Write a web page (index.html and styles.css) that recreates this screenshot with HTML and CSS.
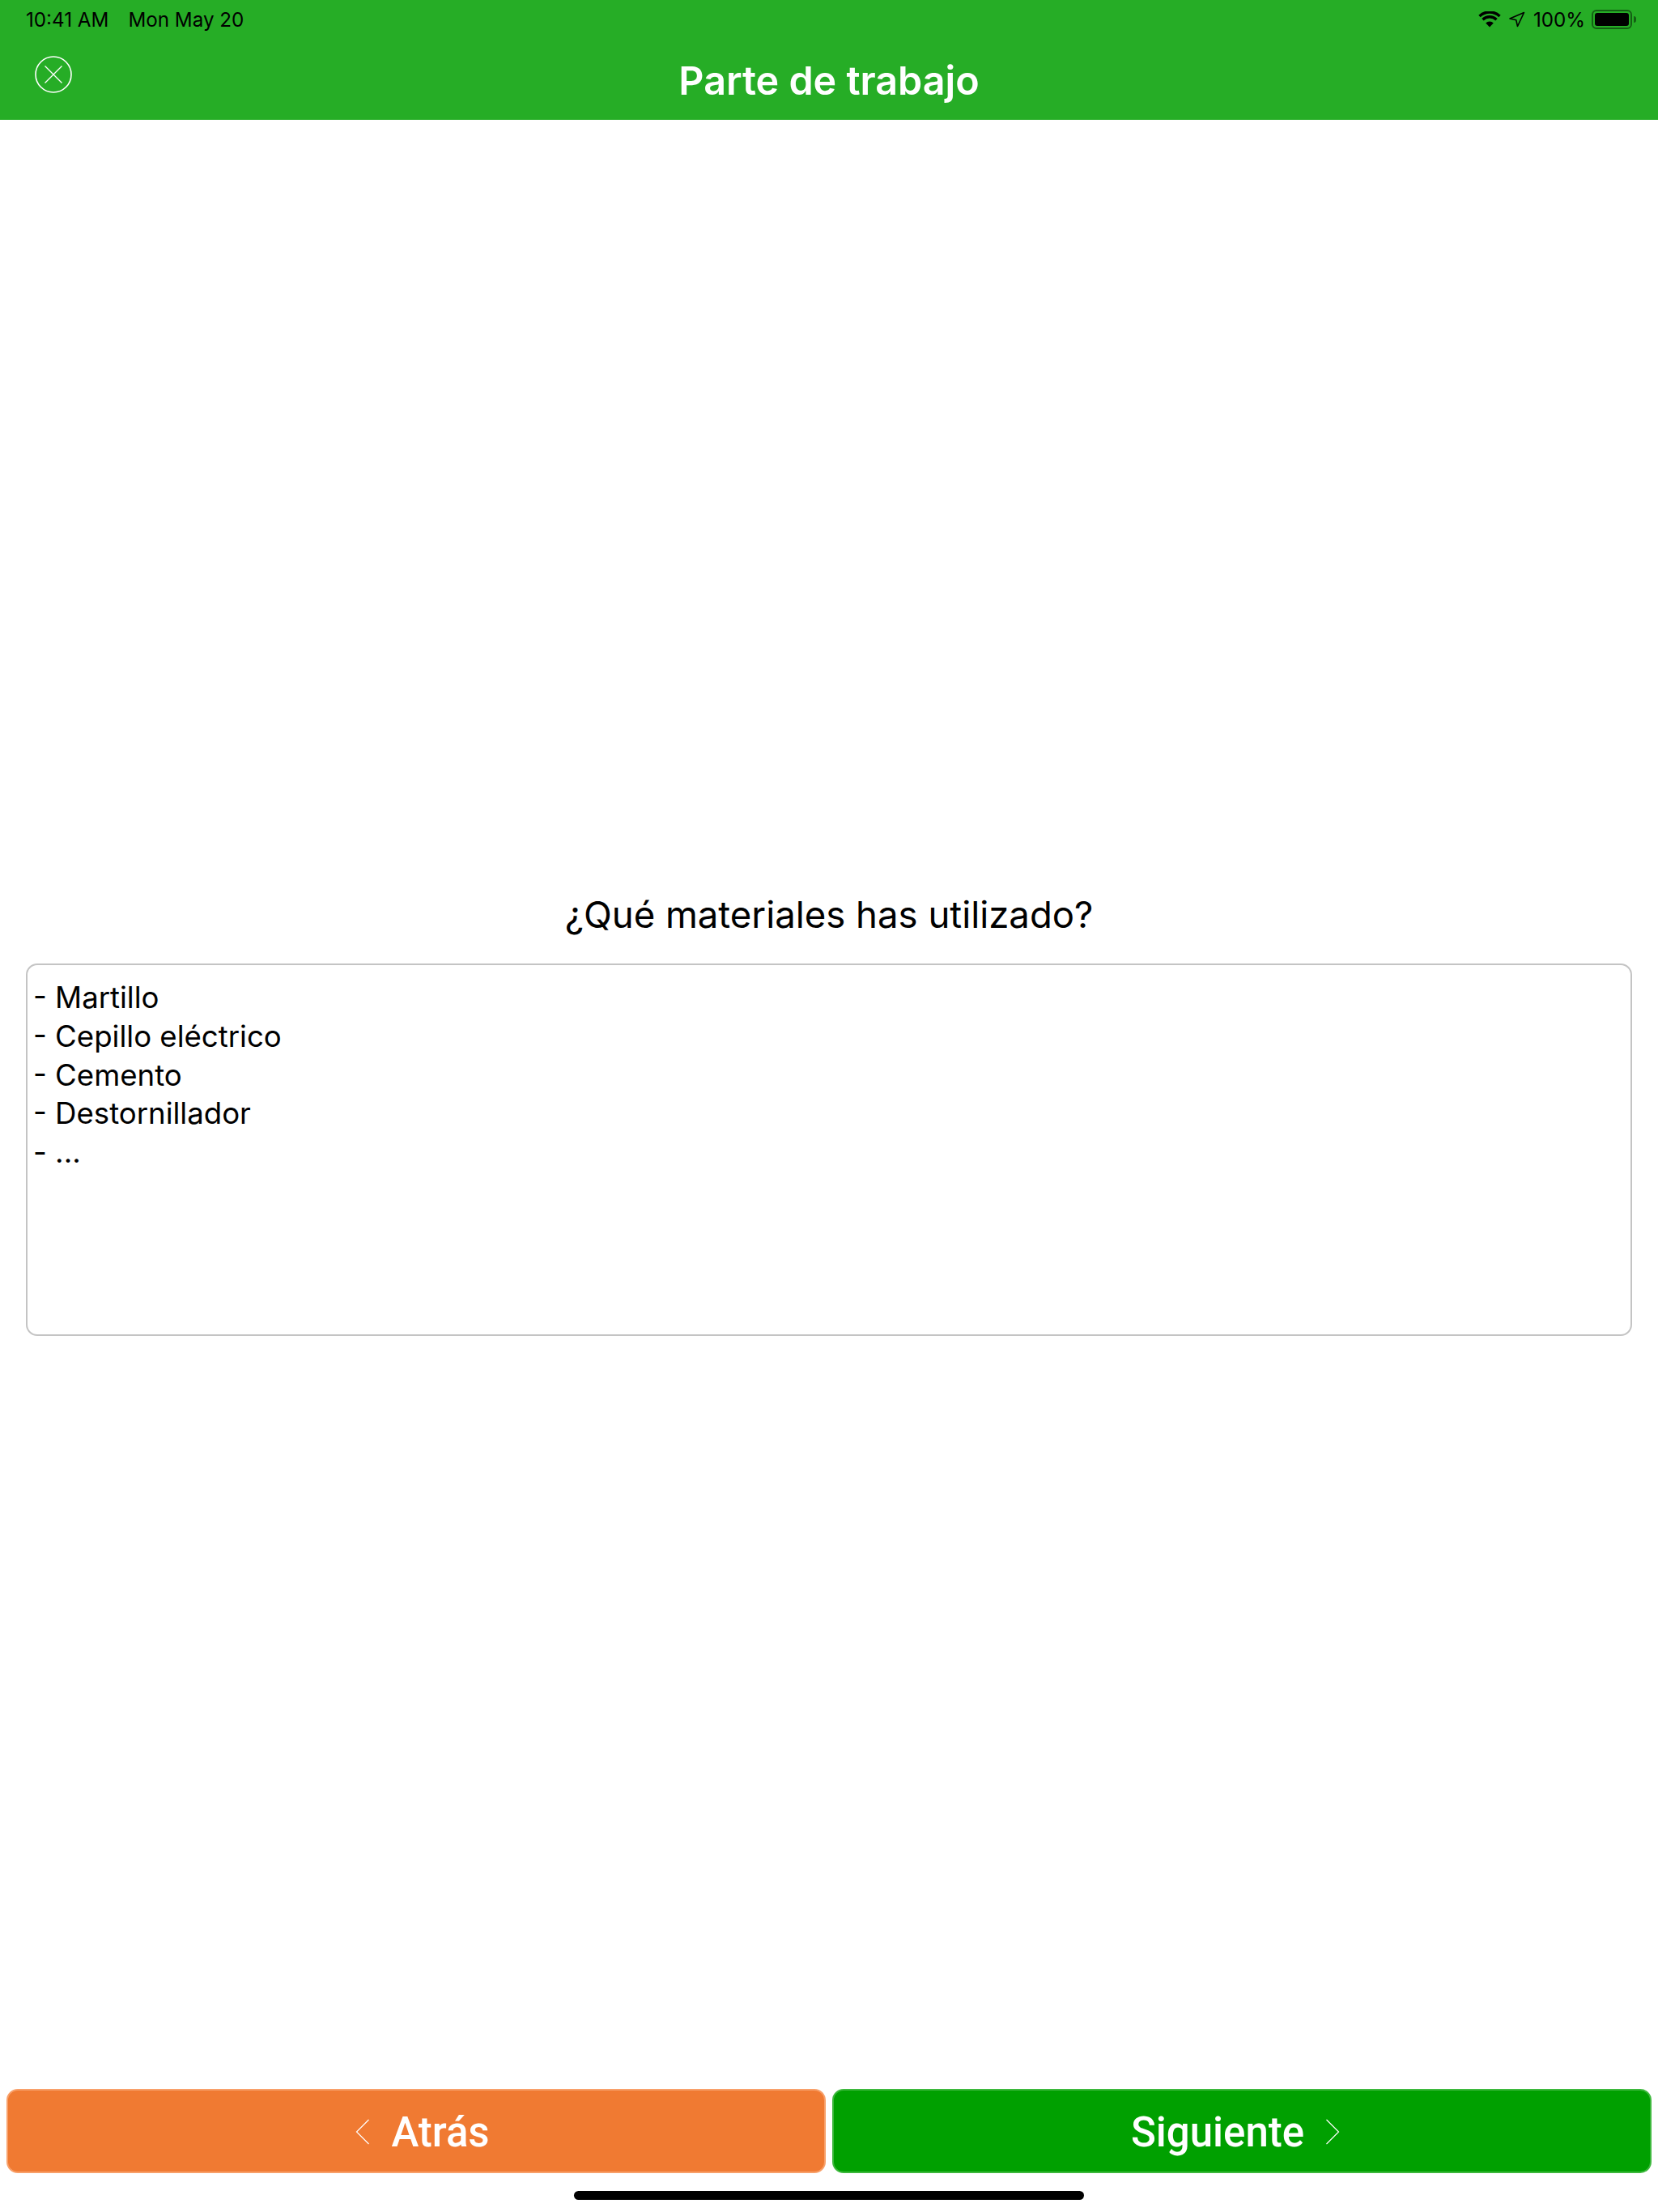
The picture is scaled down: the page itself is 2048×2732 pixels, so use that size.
FILE: index.html
```html
<!DOCTYPE html>
<html lang="es">
<head>
<meta charset="utf-8">
<title>Parte de trabajo</title>
<link rel="stylesheet" href="styles.css">
</head>
<body>
<header class="header">
  <div class="status">
    <div class="status-left"><span>10:41 AM</span><span>Mon May 20</span></div>
    <div class="status-right">
      <svg class="wifi" viewBox="0 0 28 20" width="28" height="20"><path d="M14 19.500l-4.800-5a6.800 6.800 0 0 1 9.600 0z" fill="#000"/><path d="M5.500 10.200a12.200 12.200 0 0 1 17 0" fill="none" stroke="#000" stroke-width="3.400"/><path d="M1.500 5.900a18.200 18.200 0 0 1 25 0" fill="none" stroke="#000" stroke-width="3.400"/></svg>
      <svg class="arrow" viewBox="0 0 20 20" width="20" height="20"><path d="M1 9L18.500 1.500 10.500 18.500 8.800 10.800z" fill="none" stroke="#000" stroke-width="1.600" stroke-linejoin="round"/></svg>
      <span class="pct">100%</span>
      <div class="battery"><div class="battery-fill"></div></div>
      <div class="battery-cap"></div>
    </div>
  </div>
  <div class="navbar">
    <svg class="close" viewBox="0 0 48 48" width="48" height="48"><circle cx="24" cy="24" r="22" fill="none" stroke="#fff" stroke-width="1.600"/><path d="M13.500 13.500l21 21M34.500 13.500l-21 21" fill="none" stroke="#fff" stroke-width="1.300"/></svg>
    <h1 class="title">Parte de trabajo</h1>
  </div>
</header>
<main class="content">
  <h2 class="question">¿Qué materiales has utilizado?</h2>
  <div class="answer">
    <div>- Martillo</div>
    <div>- Cepillo eléctrico</div>
    <div>- Cemento</div>
    <div>- Destornillador</div>
    <div>- ...</div>
  </div>
</main>
<footer class="footer">
  <div class="actions">
    <div class="btn btn-back">
      <svg class="chev" viewBox="0 0 18 32" width="18" height="32"><path d="M16.500 1L1.500 16l15 15" fill="none" stroke="#fff" stroke-width="1.200"/></svg>
      <span>Atrás</span>
    </div>
    <div class="btn btn-next">
      <span>Siguiente</span>
      <svg class="chev" viewBox="0 0 18 32" width="18" height="32"><path d="M1.500 1l15 15-15 15" fill="none" stroke="#fff" stroke-width="1.200"/></svg>
    </div>
  </div>
  <div class="home-bar"></div>
</footer>
</body>
</html>
```
FILE: styles.css
```css
* { box-sizing: border-box; }
html, body { margin: 0; padding: 0; }
body {
  width: 2048px;
  height: 2732px;
  display: flex;
  flex-direction: column;
  background: #fff;
  color: #000;
  font-family: Inter, "Liberation Sans", sans-serif;
  overflow: hidden;
}
.header {
  height: 148px;
  background: #26ad26;
  flex: none;
}
.status {
  height: 48px;
  padding: 0 27px 0 32px;
  display: flex;
  justify-content: space-between;
  align-items: center;
  font-size: 24.200px;
}
.status-left { display: flex; gap: 24px; }
.status-right { display: flex; align-items: center; }
.wifi { margin-right: 10px; }
.arrow { margin-right: 10px; }
.pct { margin-right: 8px; }
.battery {
  width: 50px;
  height: 24px;
  border: 2px solid rgba(0, 0, 0, 0.45);
  border-radius: 6px;
  padding: 2px;
}
.battery-fill { width: 100%; height: 100%; background: #000; border-radius: 3px; }
.battery-cap {
  width: 3px;
  height: 8px;
  margin-left: 2px;
  background: rgba(0, 0, 0, 0.45);
  border-radius: 0 3px 3px 0;
}
.navbar {
  height: 100px;
  position: relative;
  display: flex;
  justify-content: center;
}
.close { position: absolute; left: 42px; top: 20px; }
.title {
  margin: 0;
  padding-top: 20px;
  font-size: 48.400px;
  line-height: 64px;
  font-weight: 600;
  color: #fff;
}
.content {
  flex: 1;
  padding: 952px 32px 0;
}
.question {
  margin: 0;
  height: 90px;
  text-align: center;
  font-size: 45.500px;
  line-height: 60px;
  font-weight: 400;
}
.answer {
  height: 460px;
  border: 2px solid #c4c4c4;
  border-radius: 14px;
  padding: 17px 7px;
  font-size: 36.600px;
  line-height: 47.800px;
}
.footer { flex: none; }
.actions {
  display: flex;
  gap: 8px;
  padding: 0 8px;
}
.btn {
  flex: 1;
  height: 104px;
  padding-top: 2px;
  border-radius: 14px;
  display: flex;
  align-items: center;
  justify-content: center;
  gap: 26px;
  color: #fff;
  font-family: Roboto, "Liberation Sans", sans-serif;
  font-weight: 500;
  font-size: 51px;
}
.btn-back { background: #f07a32; border: 2px solid #f8a06a; padding-left: 16px; }
.btn-next { background: #00a000; border: 2px solid #3db83d; padding-right: 16px; }
.home-bar {
  width: 630px;
  height: 11px;
  margin: 22px auto 15px;
  border-radius: 6px;
  background: #000;
}
```
